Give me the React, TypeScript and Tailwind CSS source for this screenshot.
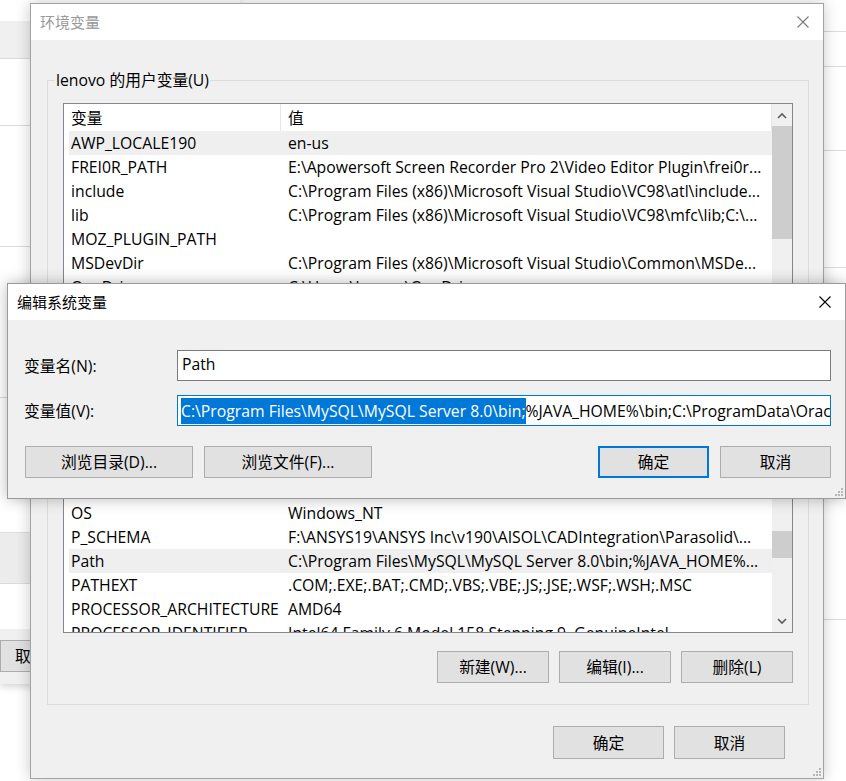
import React from 'react';
import clsx from 'clsx';

interface IRow {
    name: string;
    value: string;
    selected?: boolean;
}

const userVars: IRow[] = [
    { name: 'AWP_LOCALE190', value: 'en-us', selected: true },
    { name: 'FREI0R_PATH', value: 'E:\\Apowersoft Screen Recorder Pro 2\\Video Editor Plugin\\frei0r...' },
    { name: 'include', value: 'C:\\Program Files (x86)\\Microsoft Visual Studio\\VC98\\atl\\include...' },
    { name: 'lib', value: 'C:\\Program Files (x86)\\Microsoft Visual Studio\\VC98\\mfc\\lib;C:\\...' },
    { name: 'MOZ_PLUGIN_PATH', value: '' },
    { name: 'MSDevDir', value: 'C:\\Program Files (x86)\\Microsoft Visual Studio\\Common\\MSDe...' },
    { name: 'OneDrive', value: 'C:\\Users\\lenovo\\OneDrive' },
    { name: 'TEMP', value: '%USERPROFILE%\\AppData\\Local\\Temp' },
    { name: 'TMP', value: '%USERPROFILE%\\AppData\\Local\\Temp' },
];

const systemVars: IRow[] = [
    { name: 'NUMBER_OF_PROCESSORS', value: '8' },
    { name: 'OS', value: 'Windows_NT' },
    { name: 'P_SCHEMA', value: 'F:\\ANSYS19\\ANSYS Inc\\v190\\AISOL\\CADIntegration\\Parasolid\\...' },
    { name: 'Path', value: 'C:\\Program Files\\MySQL\\MySQL Server 8.0\\bin;%JAVA_HOME%...', selected: true },
    { name: 'PATHEXT', value: '.COM;.EXE;.BAT;.CMD;.VBS;.VBE;.JS;.JSE;.WSF;.WSH;.MSC' },
    { name: 'PROCESSOR_ARCHITECTURE', value: 'AMD64' },
    { name: 'PROCESSOR_IDENTIFIER', value: 'Intel64 Family 6 Model 158 Stepping 9, GenuineIntel' },
];

const CloseX = ({ className }: { className?: string }) => (
    <svg width="12" height="12" viewBox="0 0 12 12" className={className}>
        <path d="M0.5 0.5 L11.5 11.5 M11.5 0.5 L0.5 11.5" stroke="currentColor" strokeWidth="1.1" fill="none" />
    </svg>
);

const Chevron = ({ up }: { up?: boolean }) => (
    <svg width="10" height="7" viewBox="0 0 10 7" className="text-[#606060]">
        <path d={up ? 'M1 6 L5 2 L9 6' : 'M1 1 L5 5 L9 1'} fill="none" stroke="currentColor" strokeWidth="1.7" />
    </svg>
);

const Grip = ({ className }: { className?: string }) => (
    <svg width="8" height="8" viewBox="0 0 8 8" className={className}>
        {[[6, 0], [3, 3], [6, 3], [0, 6], [3, 6], [6, 6]].map(([x, y]) => (
            <rect key={`${x}-${y}`} x={x} y={y} width="2" height="2" fill="#b7b7b7" />
        ))}
    </svg>
);

const WinButton: React.FC<{ children: React.ReactNode; className?: string; primary?: boolean }> = ({ children, className, primary }) => (
    <div
        className={clsx(
            'flex h-[32px] shrink-0 items-center justify-center whitespace-nowrap bg-[#e1e1e1] text-black',
            primary ? 'border-2 border-[#0078d7]' : 'border border-[#adadad]',
            className
        )}
    >
        {children}
    </div>
);

interface IList {
    rows: IRow[];
    className: string;
    thumbOffset: string;
    thumbHeight: string;
}

const ListView: React.FC<IList> = ({ rows, className, thumbOffset, thumbHeight }) => (
    <div className={clsx('flex overflow-hidden border border-[#828790] bg-white', className)}>
        <div className="flex min-w-0 flex-1 flex-col">
            {/* header */}
            <div className="flex h-[27px] shrink-0 items-center border-r border-[#e5e5e5]">
                <div className="ml-[5px] flex h-full w-[212px] items-center border-r border-[#e5e5e5] pl-[2px]">变量</div>
                <div className="pl-[7px]">值</div>
            </div>
            {rows.map((r) => (
                <div key={r.name} className={clsx('ml-[5px] flex h-[24px] shrink-0 items-center', r.selected && 'bg-[#efefef]')}>
                    <div className="w-[212px] shrink-0 whitespace-nowrap pl-[2px]">{r.name}</div>
                    <div className="min-w-0 flex-1 overflow-hidden whitespace-nowrap pl-[7px]">{r.value}</div>
                </div>
            ))}
        </div>
        {/* scrollbar */}
        <div className="flex w-[20px] shrink-0 flex-col bg-[#f0f0f0]">
            <div className="flex h-[22px] shrink-0 items-center justify-center">
                <Chevron up />
            </div>
            <div className="flex-1">
                <div className={clsx('w-full bg-[#cdcdcd]', thumbOffset, thumbHeight)} />
            </div>
            <div className="flex h-[22px] shrink-0 items-center justify-center">
                <Chevron />
            </div>
        </div>
    </div>
);

export default function App() {
    return (
        <div className="relative h-[781px] w-[846px] overflow-hidden bg-white font-['Open_Sans','Noto_Sans_CJK_SC',sans-serif] text-[15.75px] leading-[24px] text-black">
            {/* window behind, left */}
            <div className="absolute left-0 top-0 flex h-[684px] w-[240px] flex-col bg-white shadow-[0_2px_8px_rgba(0,0,0,0.2)]">
                <div className="h-[21px] shrink-0" />
                <div className="h-[38px] shrink-0 border-b border-[#dcdcdc] bg-[#f0f0f0]" />
                <div className="h-[67px] shrink-0 border-b border-[#dcdcdc]" />
                <div className="h-[121px] shrink-0 border-b border-[#dcdcdc]" />
                <div className="h-[151px] shrink-0 border-b border-[#dcdcdc]" />
                <div className="h-[135px] shrink-0 border-b border-[#dcdcdc]" />
                <div className="h-[51px] shrink-0 border-b border-[#dcdcdc] bg-[#ececec]" />
                <div className="h-[45px] shrink-0" />
                <div className="flex flex-1 flex-col bg-[#f0f0f0] pt-[11px]">
                    <div className="flex h-[32px] w-[110px] items-center border border-[#adadad] bg-[#e1e1e1] pl-[14px]">取消</div>
                </div>
            </div>

            {/* window behind, right */}
            <div className="absolute left-[600px] top-0 flex h-[781px] w-[246px] flex-col bg-white">
                <div className="h-[32px] shrink-0 border-b border-[#dcdcdc]" />
                <div className="h-[35px] shrink-0 border-b border-[#dcdcdc]" />
                <div className="h-[84px] shrink-0 border-b border-[#dcdcdc]" />
                <div className="h-[117px] shrink-0 border-b border-[#dcdcdc]" />
                <div className="h-[352px] shrink-0 border-b border-[#dcdcdc]" />
            </div>

            {/* 环境变量 */}
            <div className="absolute left-[30px] top-[3px] flex h-[776px] w-[794px] flex-col border border-[#a3a3a3] bg-[#f0f0f0] shadow-[0_0_14px_rgba(0,0,0,0.22)]">
                <div className="flex h-[36px] shrink-0 items-center justify-between bg-white pl-[9px] pr-[14px]">
                    <span className="text-[15px] text-[#999999]">环境变量</span>
                    <CloseX className="text-[#7a7a7a]" />
                </div>
                <div className="relative flex flex-1 flex-col pl-[16px] pr-[14px]">
                    {/* user variables */}
                    <div className="relative mt-[40px] flex flex-col border border-[#dcdcdc] pb-[10px]">
                        <span className="absolute left-[7px] top-[-11px] bg-[#f0f0f0] px-[1px] leading-[20px]">lenovo 的用户变量(U)</span>
                        <ListView rows={userVars} className="mx-[15px] mt-[22px] h-[250px]" thumbOffset="mt-0" thumbHeight="h-[113px]" />
                        <div className="mt-[14px] flex justify-end gap-[11px] px-[15px]">
                            <WinButton className="w-[112px]">新建(N)...</WinButton>
                            <WinButton className="w-[112px]">编辑(E)...</WinButton>
                            <WinButton className="w-[112px]">删除(D)</WinButton>
                        </div>
                    </div>

                    {/* system variables */}
                    <div className="relative mt-[15px] flex flex-col border border-[#dcdcdc] pb-[21px]">
                        <span className="absolute left-[7px] top-[-11px] bg-[#f0f0f0] px-[1px] leading-[20px]">系统变量(S)</span>
                        <ListView rows={systemVars} className="mx-[15px] mt-[23px] h-[184px]" thumbOffset="mt-[59px]" thumbHeight="h-[27px]" />
                        <div className="mt-[18px] flex justify-end gap-[10px] px-[15px]">
                            <WinButton className="w-[112px]">新建(W)...</WinButton>
                            <WinButton className="w-[112px]">编辑(I)...</WinButton>
                            <WinButton className="w-[112px]">删除(L)</WinButton>
                        </div>
                    </div>

                    <div className="mt-[21px] flex justify-end gap-[10px] pr-[24px]">
                        <WinButton className="h-[33px] w-[111px]">确定</WinButton>
                        <WinButton className="h-[33px] w-[111px]">取消</WinButton>
                    </div>
                    <Grip className="absolute bottom-[2px] right-[2px]" />
                </div>
            </div>

            {/* 编辑系统变量 */}
            <div className="absolute left-[7px] top-[283px] flex h-[216px] w-[839px] flex-col border border-[#9a9a9a] bg-[#f0f0f0] shadow-[0_0_14px_rgba(0,0,0,0.28)]">
                <div className="flex h-[36px] shrink-0 items-center justify-between bg-white pl-[9px] pr-[14px]">
                    <span className="text-[15px]">编辑系统变量</span>
                    <CloseX className="text-black" />
                </div>
                <div className="relative flex flex-1 flex-col pl-[16px] pr-[14px]">
                    <div className="mt-[30px] flex items-center">
                        <span className="w-[153px] shrink-0">变量名(N):</span>
                        <div className="flex h-[31px] flex-1 items-center border border-[#7a7a7a] bg-white pb-[3px] pl-[4px]">Path</div>
                    </div>
                    <div className="mt-[14px] flex items-center">
                        <span className="w-[153px] shrink-0">变量值(V):</span>
                        <div className="flex h-[31px] min-w-0 flex-1 items-center overflow-hidden whitespace-nowrap border border-[#0078d7] bg-white pl-[3px]">
                            <span className="bg-[#0078d7] leading-[26px] text-white">C:\Program Files\MySQL\MySQL Server 8.0\bin;</span>
                            <span>%JAVA_HOME%\bin;C:\ProgramData\Oracle\Java\javapath;%SystemRoot%\system32</span>
                        </div>
                    </div>
                    <div className="ml-[1px] mt-[20px] flex">
                        <div className="flex gap-[11px]">
                            <WinButton className="w-[168px]">浏览目录(D)...</WinButton>
                            <WinButton className="w-[168px]">浏览文件(F)...</WinButton>
                        </div>
                        <div className="ml-auto flex gap-[11px]">
                            <WinButton primary className="w-[111px]">确定</WinButton>
                            <WinButton className="w-[111px]">取消</WinButton>
                        </div>
                    </div>
                    <Grip className="absolute bottom-[2px] right-[2px]" />
                </div>
            </div>
        </div>
    );
}
